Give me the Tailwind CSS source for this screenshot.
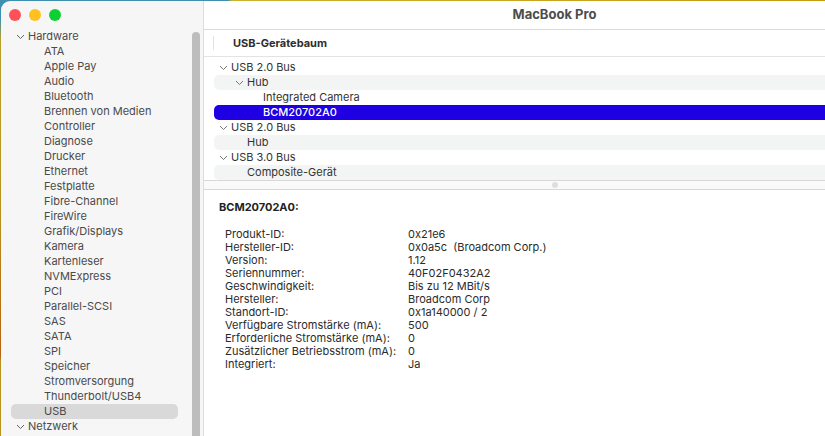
<!DOCTYPE html>
<html lang="de">
<head>
<meta charset="UTF-8">
<title>MacBook Pro</title>
<script src="https://cdn.jsdelivr.net/npm/@tailwindcss/browser@4"></script>
</head>
<body class="overflow-hidden">
<div class="h-[436px] w-[825px] bg-[linear-gradient(180deg,#3f8fb0_0,#3f8fb0_18px,#b8a02a_40px,#b8941f_200px,#b5640f_355px,#b8941f_362px,#b8941f_100%)] font-['Inter',sans-serif] text-[11px] text-[#333]">
  <div class="h-px bg-[linear-gradient(90deg,#3f8fb0_0,#3f8fb0_228px,#c9b42f_232px,#c49a10_100%)]"></div>
  <div class="flex h-[435px] rounded-tl-[9px] overflow-hidden ml-px">

    <!-- sidebar -->
    <aside class="relative w-[203px] shrink-0 bg-[#f6f6f6] border-r border-[#dcdcdc] text-[#4a4a4a]">
      <div class="flex gap-2 pl-2 pt-2 h-[28px]">
        <span class="size-3 rounded-full bg-[#ff4f58]"></span>
        <span class="size-3 rounded-full bg-[#ffc11f]"></span>
        <span class="size-3 rounded-full bg-[#0fd032]"></span>
      </div>
      <div class="absolute right-[3px] top-[31px] bottom-0 w-2 rounded-t-full bg-[#bdbdbd]"></div>
      <ul class="leading-[15px]">
        <li class="flex items-center pl-[15px] gap-[3px]"><svg class="w-[9px] h-[6px]" viewBox="0 0 9 6" fill="none" stroke="#666" stroke-width="1"><path d="M1 1l3.500 3.500L8 1"/></svg>Hardware</li>
        <li class="pl-[43px]">ATA</li>
        <li class="pl-[43px]">Apple Pay</li>
        <li class="pl-[43px]">Audio</li>
        <li class="pl-[43px]">Bluetooth</li>
        <li class="pl-[43px]">Brennen von Medien</li>
        <li class="pl-[43px]">Controller</li>
        <li class="pl-[43px]">Diagnose</li>
        <li class="pl-[43px]">Drucker</li>
        <li class="pl-[43px]">Ethernet</li>
        <li class="pl-[43px]">Festplatte</li>
        <li class="pl-[43px]">Fibre-Channel</li>
        <li class="pl-[43px]">FireWire</li>
        <li class="pl-[43px]">Grafik/Displays</li>
        <li class="pl-[43px]">Kamera</li>
        <li class="pl-[43px]">Kartenleser</li>
        <li class="pl-[43px]">NVMExpress</li>
        <li class="pl-[43px]">PCI</li>
        <li class="pl-[43px]">Parallel-SCSI</li>
        <li class="pl-[43px]">SAS</li>
        <li class="pl-[43px]">SATA</li>
        <li class="pl-[43px]">SPI</li>
        <li class="pl-[43px]">Speicher</li>
        <li class="pl-[43px]">Stromversorgung</li>
        <li class="pl-[43px]">Thunderbolt/USB4</li>
        <li class="ml-[10px] w-[167px] pl-[33px] rounded-[5px] bg-[#d9d9d9]">USB</li>
        <li class="flex items-center pl-[15px] gap-[3px]"><svg class="w-[9px] h-[6px]" viewBox="0 0 9 6" fill="none" stroke="#666" stroke-width="1"><path d="M1 1l3.500 3.500L8 1"/></svg>Netzwerk</li>
      </ul>
    </aside>

    <!-- main -->
    <main class="flex-1 bg-white min-w-0">
      <header class="h-[29px] border-b border-[#dadada] flex items-center justify-center pl-[80px] text-[13px] font-bold text-[#4d4d4d]">MacBook Pro</header>
      <div class="h-[27px] border-b border-[#e3e3e3] flex items-center pl-[9px]">
        <span class="w-px h-[14px] bg-[#e3e3e3] mr-[19px]"></span>
        <span class="font-bold text-[#2e2e2e] text-[11px]">USB-Gerätebaum</span>
      </div>
      <ul class="pt-[3px] pl-[10px] leading-[15px] h-[124px] border-b border-[#d8d8d8] text-[#333]">
        <li class="flex items-center pl-[5px] gap-[3px]"><svg class="w-[9px] h-[6px]" viewBox="0 0 9 6" fill="none" stroke="#777" stroke-width="1"><path d="M1 1l3.500 3.500L8 1"/></svg>USB 2.0 Bus</li>
        <li class="flex items-center pl-[21px] gap-[3px] bg-[#f3f5f4] rounded-l-[5px]"><svg class="w-[9px] h-[6px]" viewBox="0 0 9 6" fill="none" stroke="#777" stroke-width="1"><path d="M1 1l3.500 3.500L8 1"/></svg>Hub</li>
        <li class="pl-[49px]">Integrated Camera</li>
        <li class="pl-[49px] bg-[#1e00e2] text-white font-medium rounded-l-[5px]">BCM20702A0</li>
        <li class="flex items-center pl-[5px] gap-[3px]"><svg class="w-[9px] h-[6px]" viewBox="0 0 9 6" fill="none" stroke="#777" stroke-width="1"><path d="M1 1l3.500 3.500L8 1"/></svg>USB 2.0 Bus</li>
        <li class="pl-[33px] bg-[#f3f5f4] rounded-l-[5px]">Hub</li>
        <li class="flex items-center pl-[5px] gap-[3px]"><svg class="w-[9px] h-[6px]" viewBox="0 0 9 6" fill="none" stroke="#777" stroke-width="1"><path d="M1 1l3.500 3.500L8 1"/></svg>USB 3.0 Bus</li>
        <li class="pl-[33px] bg-[#f3f5f4] rounded-l-[5px]">Composite-Gerät</li>
      </ul>
      <div class="h-[9px] border-b border-[#d8d8d8] bg-[#fafafa] flex items-center justify-center pl-[80px]">
        <span class="size-[6px] rounded-full bg-[#dedede]"></span>
      </div>
      <section class="pl-[15px] pt-[11px] text-[#2b2b2b]">
        <h2 class="font-bold text-[11px] leading-[13px] text-[#222]">BCM20702A0:</h2>
        <dl class="grid grid-cols-[183px_1fr] pl-[6px] mt-[14px] leading-[13px]">
          <dt>Produkt-ID:</dt><dd>0x21e6</dd>
          <dt>Hersteller-ID:</dt><dd class="whitespace-pre">0x0a5c  (Broadcom Corp.)</dd>
          <dt>Version:</dt><dd>1.12</dd>
          <dt>Seriennummer:</dt><dd>40F02F0432A2</dd>
          <dt>Geschwindigkeit:</dt><dd>Bis zu 12 MBit/s</dd>
          <dt>Hersteller:</dt><dd>Broadcom Corp</dd>
          <dt>Standort-ID:</dt><dd>0x1a140000 / 2</dd>
          <dt>Verfügbare Stromstärke (mA):</dt><dd>500</dd>
          <dt>Erforderliche Stromstärke (mA):</dt><dd>0</dd>
          <dt>Zusätzlicher Betriebsstrom (mA):</dt><dd>0</dd>
          <dt>Integriert:</dt><dd>Ja</dd>
        </dl>
      </section>
    </main>
  </div>
</div>
</body>
</html>
